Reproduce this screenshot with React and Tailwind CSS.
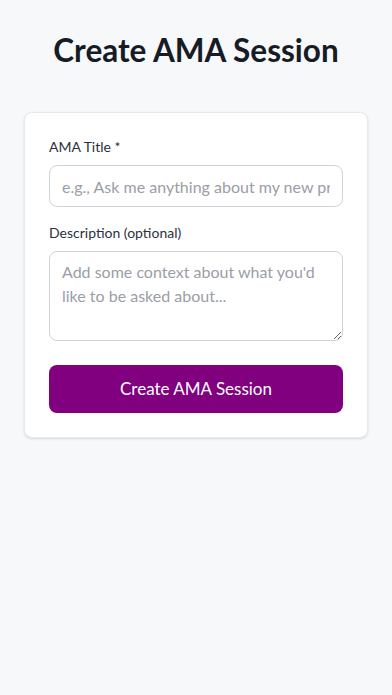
import React, { useState } from 'react';

const App = () => {
  const [title, setTitle] = useState('');
  const [description, setDescription] = useState('');

  return (
    <div
      className="min-h-[695px] bg-[#f7f8fa] px-6 pt-8"
      style={{ fontFamily: '"Lato", "Noto Sans", sans-serif' }}
    >
      <h1 className="text-center text-[31.5px] leading-9 font-bold text-[#161b26] mb-11">
        Create AMA Session
      </h1>

      {/* Form card */}
      <div className="bg-white rounded-lg border border-[#e8eaee] shadow-sm p-6">
        <div className="flex flex-col">
          <label className="text-sm text-[#2b3140] mb-2 leading-5">AMA Title *</label>
          <input
            type="text"
            value={title}
            onChange={(e) => setTitle(e.target.value)}
            placeholder="e.g., Ask me anything about my new project"
            className="h-[42px] w-full rounded-lg border border-[#cfd3da] px-3 text-base text-[#111827] placeholder:text-[#9a9ea6] outline-none"
          />

          <label className="text-sm text-[#2b3140] mt-4 mb-2 leading-5">Description (optional)</label>
          <textarea
            value={description}
            onChange={(e) => setDescription(e.target.value)}
            placeholder="Add some context about what you'd like to be asked about..."
            rows={3}
            className="h-[90px] w-full rounded-lg border border-[#cfd3da] px-3 py-2 text-base leading-6 text-[#111827] placeholder:text-[#9a9ea6] outline-none"
          />

          <button
            type="button"
            className="mt-6 h-12 w-full rounded-lg bg-[#800080] text-white text-[17px]"
          >
            Create AMA Session
          </button>
        </div>
      </div>
    </div>
  );
};

export default App;
